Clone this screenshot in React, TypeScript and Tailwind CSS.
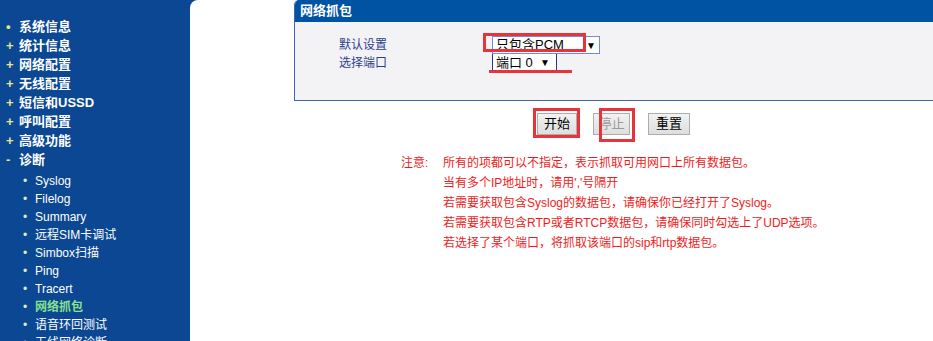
import type React from "react";

const cjk = "font-['Liberation_Sans','Noto_Sans_CJK_SC',sans-serif]";

const topMenu: { mark: string; label: string }[] = [
  { mark: "•", label: "系统信息" },
  { mark: "+", label: "统计信息" },
  { mark: "+", label: "网络配置" },
  { mark: "+", label: "无线配置" },
  { mark: "+", label: "短信和USSD" },
  { mark: "+", label: "呼叫配置" },
  { mark: "+", label: "高级功能" },
  { mark: "-", label: "诊断" },
];

const subMenu = [
  "Syslog",
  "Filelog",
  "Summary",
  "远程SIM卡调试",
  "Simbox扫描",
  "Ping",
  "Tracert",
  "网络抓包",
  "语音环回测试",
  "无线网络诊断",
];

const notes = [
  "所有的项都可以不指定，表示抓取可用网口上所有数据包。",
  "当有多个IP地址时，请用','号隔开",
  "若需要获取包含Syslog的数据包，请确保你已经打开了Syslog。",
  "若需要获取包含RTP或者RTCP数据包，请确保同时勾选上了UDP选项。",
  "若选择了某个端口，将抓取该端口的sip和rtp数据包。",
];

const Sidebar: React.FC = () => {
  return (
    <div className="w-[190px] shrink-0 pt-[17px]">
      {topMenu.map((m) => (
        <div key={m.label} className="flex items-center h-[19px] text-white text-[13px] font-bold">
          <span className="w-[19px] pl-[6px] text-[#ece48a]">{m.mark}</span>
          <span>{m.label}</span>
        </div>
      ))}
      <div className="mt-[3px]">
        {subMenu.map((s) => (
          <div key={s} className="flex items-center h-[18px] text-[12px]">
            <span className="w-[35px] pl-[23px] text-[#dfe9c2]">•</span>
            <span className={s === "网络抓包" ? "text-[#86e08e] font-bold" : "text-white"}>{s}</span>
          </div>
        ))}
      </div>
    </div>
  );
};

const Btn: React.FC<{ label: string; w: string; disabled?: boolean }> = ({ label, w, disabled }) => (
  <div
    className={`${w} h-[22px] flex items-center justify-center border border-[#adadad] bg-gradient-to-b from-[#f2f2f2] to-[#dedede] text-[13px] ${
      disabled ? "text-[#9a9a9a]" : "text-black"
    }`}
  >
    {label}
  </div>
);

export default function App() {
  return (
    <div className={`w-[933px] h-[341px] overflow-hidden flex bg-[#0b4792] ${cjk}`}>
      <Sidebar />

      <div className="flex-1 bg-white rounded-tl-[8px] pl-[104px]">
        {/* capture panel */}
        <div className="relative h-[101px] w-[650px] bg-[#f3f2f5] border-l border-b border-[#3d68b0] rounded-tl-[5px] overflow-hidden">
          <div className="h-[22px] bg-[#0052a3] text-white text-[13px] font-bold pl-[5px] flex items-center">
            网络抓包
          </div>
          <div className="flex pt-[14px] pl-[44px]">
            <div className="w-[153px] text-[12px] text-[#2c3f8f] leading-[18px]">
              <div>默认设置</div>
              <div>选择端口</div>
            </div>
            <div className="flex flex-col">
              <div className="w-[108px] h-[18px] border border-[#6d8fd2] bg-white flex items-center justify-between text-[13px] text-black pl-[3px] pr-[3px]">
                <span>只包含PCM</span>
                <span className="text-[10px]">▼</span>
              </div>
              <div className="w-[65px] h-[18px] border-x border-b border-[#2a3788] bg-white flex items-center justify-between text-[13px] text-black pl-[3px] pr-[6px]">
                <span>端口 0</span>
                <span className="text-[10px]">▼</span>
              </div>
            </div>
          </div>
          {/* red annotations */}
          <div className="absolute left-[188px] top-[33px] w-[103px] h-[19px] border-[3px] border-[#e8333a]" />
          <div className="absolute left-[194px] top-[70px] w-[83px] h-[3px] bg-[#e8333a]" />
        </div>

        <div className="relative flex ml-[243px] mt-[12px]">
          <Btn label="开始" w="w-[40px]" />
          <div className="w-[16px]" />
          <Btn label="停止" w="w-[37px]" disabled />
          <div className="w-[18px]" />
          <Btn label="重置" w="w-[42px]" />
          <div className="absolute left-[-4px] top-[-5px] w-[47px] h-[30px] border-[3px] border-[#e8333a]" />
          <div className="absolute left-[62px] top-[-5px] w-[36px] h-[34px] border-[3px] border-[#e8333a]" />
        </div>

        <div className="flex mt-[18px] ml-[107px] text-[12px] text-[#f01c1c] leading-[20px]">
          <div className="w-[42px]">注意:</div>
          <div>
            {notes.map((n) => (
              <div key={n}>{n}</div>
            ))}
          </div>
        </div>
      </div>
    </div>
  );
}
